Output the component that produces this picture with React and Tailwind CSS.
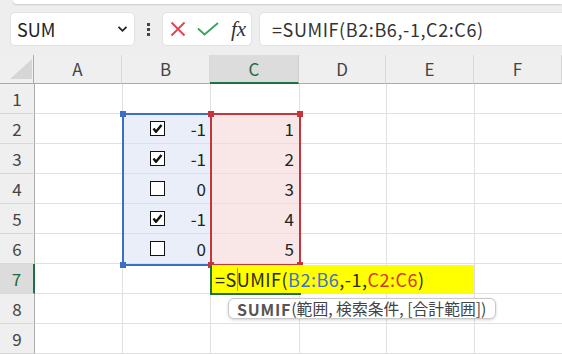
import React from "react";

const FONT = { fontFamily: '"Noto Sans CJK JP", "Noto Sans", sans-serif' };

function Check({ on }) {
  return (
    <div className="w-[15px] h-[15px] border-[1.5px] border-[#111] bg-white flex items-center justify-center">
      {on && (
        <svg width="11" height="11" viewBox="0 0 11 11">
          <path d="M1.5 5.5 L4 8.8 L9.5 2" stroke="#111" strokeWidth="2.4" fill="none" strokeLinejoin="round" />
        </svg>
      )}
    </div>
  );
}

const cols = ["A", "B", "C", "D", "E", "F"];
const widths = ["w-[88px]", "w-[88px]", "w-[89px]", "w-[87px]", "w-[88px]", "w-[88px]"];
const bData = [null, [true, "-1"], [true, "-1"], [false, "0"], [true, "-1"], [false, "0"]];

export default function App() {
  const rows = [1, 2, 3, 4, 5, 6, 7, 8, 9];
  return (
    <div className="relative w-[562px] h-[354px] overflow-hidden bg-white text-[#333]" style={FONT}>
      {/* toolbar */}
      <div className="h-[55px] bg-[#eeeeee] flex flex-col">
        <div className="h-[4px] pl-[13px]">
          <div className="h-full bg-white rounded-bl-[6px] shadow-[0_1px_2px_rgba(0,0,0,0.15)]" />
        </div>
        <div className="mt-[8px] h-[34px] flex items-stretch pl-[10px]">
          <div className="w-[125px] bg-white rounded-[5px] border border-[#e2e2e2] flex items-center justify-between pl-[6px] pr-[6px]">
            <span className="text-[18px] leading-none text-[#222]">SUM</span>
            <svg width="11" height="8" viewBox="0 0 11 8">
              <path d="M1.5 1.8 L5.5 5.8 L9.5 1.8" stroke="#222" strokeWidth="1.8" fill="none" />
            </svg>
          </div>
          <div className="w-[27px] flex flex-col items-center justify-center gap-[2px]">
            <div className="w-[3px] h-[3px] bg-[#444]" />
            <div className="w-[3px] h-[3px] bg-[#444]" />
            <div className="w-[3px] h-[3px] bg-[#444]" />
          </div>
          <div className="w-[90px] bg-white rounded-[5px] border border-[#e2e2e2] flex items-center pl-[6px]">
            <svg width="16" height="16" viewBox="0 0 16 16" className="ml-[1px]">
              <path d="M1.5 1.5 L14.5 14.5 M14.5 1.5 L1.5 14.5" stroke="#e2424a" strokeWidth="1.8" />
            </svg>
            <svg width="22" height="14" viewBox="0 0 22 14" className="ml-[11px]">
              <path d="M1 6.5 L7.5 12.5 L21 1" stroke="#3aa35a" strokeWidth="1.8" fill="none" />
            </svg>
            <span className="ml-[12px] text-[21px] italic leading-none text-[#333]" style={{ fontFamily: '"Liberation Serif", "DejaVu Serif", serif' }}>fx</span>
          </div>
          <div className="ml-[7px] flex-1 bg-white rounded-l-[5px] border border-r-0 border-[#e2e2e2] flex items-center pl-[12px]">
            <span className="text-[18px] tracking-[0.6px] leading-none text-[#333]">=SUMIF(B2:B6,-1,C2:C6)</span>
          </div>
        </div>
      </div>

      {/* grid */}
      <div className="flex flex-col">
        {/* header row */}
        <div className="flex h-[29px]">
          <div className="w-[35px] bg-[#efefef] border-r border-b border-[#ababab] relative">
            <svg className="absolute left-[10px] top-[4px]" width="22" height="20" viewBox="0 0 22 20">
              <path d="M22 0 L22 20 L0 20 Z" fill="#d6d6d6" />
            </svg>
          </div>
          {cols.map((c, i) => (
            <div
              key={c}
              className={`${widths[i]} shrink-0 flex items-center justify-center text-[17px] ${
                c === "C"
                  ? "bg-[#dcdcdc] border-b-2 border-b-[#1e7145] text-[#1b6a44] border-r border-r-[#d0d0d0]"
                  : "bg-[#efefef] border-b border-b-[#ababab] text-[#444] border-r border-r-[#d8d8d8]"
              }`}
            >
              {c}
            </div>
          ))}
        </div>
        {rows.map((r) => (
          <div key={r} className="flex h-[30px]">
            <div
              className={`w-[35px] shrink-0 flex items-center justify-center text-[17px] border-b border-b-[#d8d8d8] ${
                r === 7
                  ? "bg-[#dcdcdc] border-r-2 border-r-[#1e7145] text-[#1b6a44]"
                  : "bg-[#efefef] border-r border-r-[#ababab] text-[#444]"
              }`}
            >
              {r}
            </div>
            {cols.map((c, i) => {
              const inB = c === "B" && r >= 2 && r <= 6;
              const inC = c === "C" && r >= 2 && r <= 6;
              return (
                <div
                  key={c}
                  className={`${widths[i]} shrink-0 border-r border-b border-[#e0e0e0] flex items-center text-[17px] text-[#222] ${
                    inB ? "bg-[#e9eef8] justify-between pl-[27px] pr-[4px]" : ""
                  } ${inC ? "bg-[#f9e7e7] justify-end pr-[5px]" : ""}`}
                >
                  {inB && (
                    <>
                      <Check on={bData[r - 1][0]} />
                      <span>{bData[r - 1][1]}</span>
                    </>
                  )}
                  {inC && <span>{r - 1}</span>}
                </div>
              );
            })}
          </div>
        ))}
      </div>

      {/* range highlights */}
      <div className="absolute left-[122px] top-[113px] w-[90px] h-[153px] border-2 border-[#3b6fc6]" />
      <div className="absolute left-[120px] top-[111px] w-[6px] h-[6px] bg-[#3b6fc6]" />
      <div className="absolute left-[120px] top-[262px] w-[6px] h-[6px] bg-[#3b6fc6]" />
      <div className="absolute left-[210px] top-[113px] w-[91px] h-[153px] border-2 border-[#c4363c]" />
      <div className="absolute left-[208px] top-[111px] w-[6px] h-[6px] bg-[#c4363c]" />
      <div className="absolute left-[297px] top-[111px] w-[6px] h-[6px] bg-[#c4363c]" />
      <div className="absolute left-[208px] top-[262px] w-[6px] h-[6px] bg-[#c4363c]" />
      <div className="absolute left-[297px] top-[262px] w-[6px] h-[6px] bg-[#c4363c]" />

      {/* active cell */}
      <div className="absolute left-[210px] top-[265px] w-[91px] h-[30px] border-2 border-[#1e7145]" />
      <div className="absolute left-[212px] top-[265px] w-[262px] h-[28px] bg-[#ffff00] flex items-center pl-[3px] text-[18px] tracking-[0.5px] text-[#2b2b00] leading-none whitespace-nowrap">
        <span>=S</span>
        <span className="inline-block w-px h-[23px] bg-[#9a9a60] -mr-px" />
        <span>UMIF(</span>
        <span className="text-[#3f72c9]">B2:B6</span>
        <span>,-1,</span>
        <span className="text-[#d23a2a]">C2:C6</span>
        <span>)</span>
      </div>

      {/* tooltip */}
      <div className="absolute left-[228px] top-[298px] w-[268px] h-[21px] bg-white border border-[#c9c9c9] rounded-[6px] shadow-[0_1px_3px_rgba(0,0,0,0.18)] flex items-center pl-[8px] text-[15.8px] text-[#444] leading-none whitespace-nowrap">
        <span className="font-bold text-[#555] text-[16px] tracking-[0.8px]">SUMIF</span>
        <span>(範囲, 検索条件, [合計範囲])</span>
      </div>
    </div>
  );
}
